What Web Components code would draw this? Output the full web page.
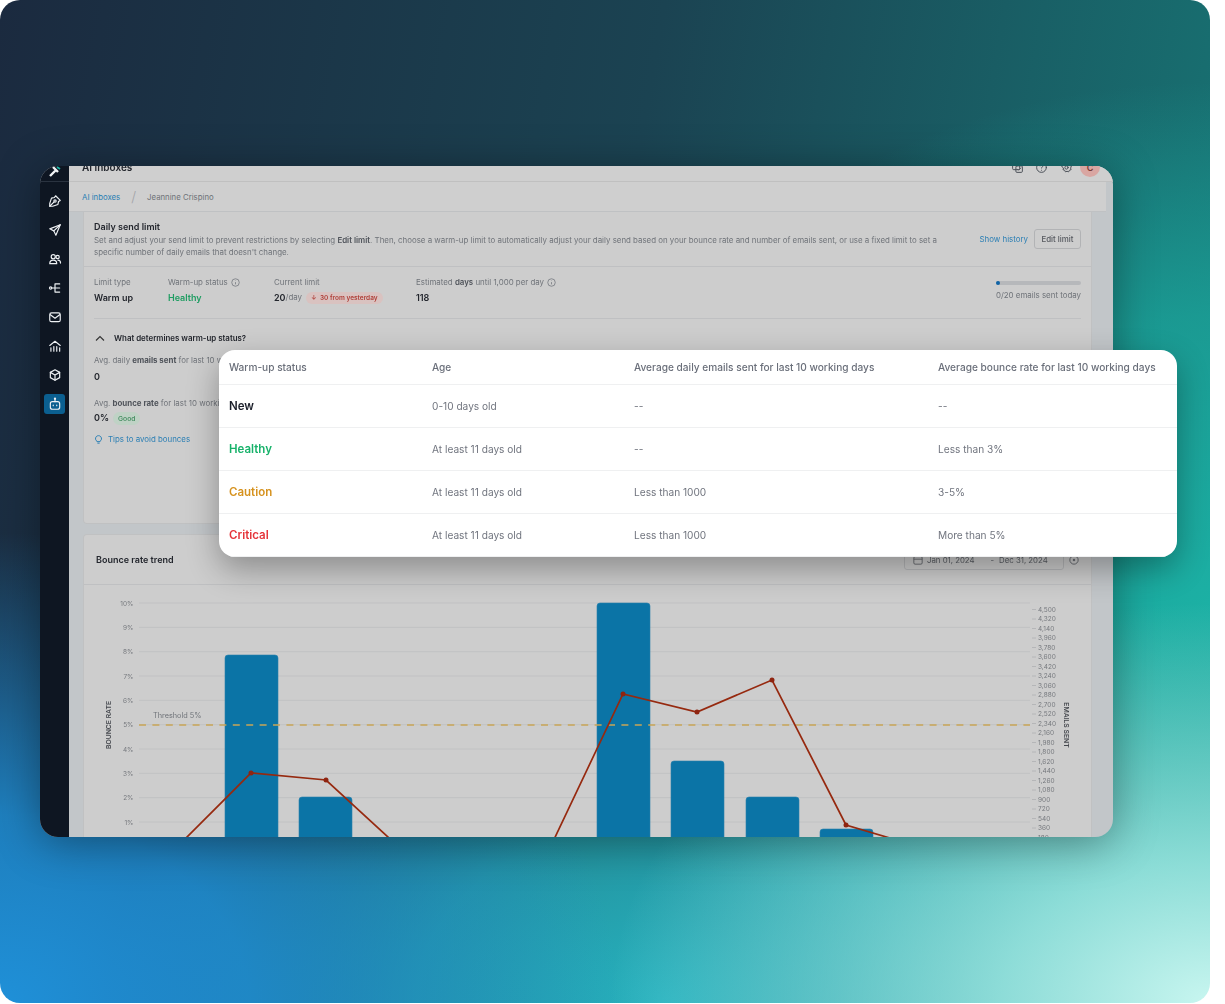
<!DOCTYPE html>
<html lang="en"><head><meta charset="utf-8"><title>AI inboxes</title>
<style>html,body{margin:0;background:#fff;font-family:Inter,"Liberation Sans",sans-serif}</style>
</head><body>
<hero-canvas>
  <app-window>
    <side-nav></side-nav>
    <top-bar></top-bar>
    <bread-crumbs></bread-crumbs>
    <send-limit-card></send-limit-card>
    <trend-card></trend-card>
  </app-window>
  <status-table>
    <status-row label="New" tone="#1b1f2a" age="0-10 days old" sent="--" bounce="--"></status-row>
    <status-row label="Healthy" tone="#17b26a" age="At least 11 days old" sent="--" bounce="Less than 3%"></status-row>
    <status-row label="Caution" tone="#d6921e" age="At least 11 days old" sent="Less than 1000" bounce="3-5%"></status-row>
    <status-row label="Critical" tone="#e5343a" age="At least 11 days old" sent="Less than 1000" bounce="More than 5%"></status-row>
  </status-table>
</hero-canvas>
<script>
function def(name, css, html, init){
  customElements.define(name, class extends HTMLElement{
    connectedCallback(){
      if(this.shadowRoot) return;
      const r=this.attachShadow({mode:'open'});
      r.innerHTML='<style>'+css+'</style>'+(typeof html==='function'?html(this):html);
      if(init) init(r,this);
    }
  });
}
def('hero-canvas',`
:host{display:block;position:relative;width:1210px;height:1003px;border-radius:20px;overflow:hidden;
background:
 radial-gradient(ellipse 600px 400px at 100% 100%,#c8f6f0 0,rgba(160,232,226,.85) 35%,rgba(90,210,200,0) 100%),
 radial-gradient(ellipse 620px 470px at 0% 100%,#1f90d8 0,rgba(31,144,216,.82) 40%,rgba(31,120,180,0) 100%),
 radial-gradient(ellipse 560px 400px at 55% 100%,#27b2bf 0,rgba(39,178,190,.7) 45%,rgba(39,178,190,0) 100%),
 radial-gradient(ellipse 640px 520px at 100% 60%,#1cb0a4 0,rgba(28,176,164,.65) 55%,rgba(28,176,164,0) 100%),
 linear-gradient(100deg,#1b2a3f 0,#1b4352 48%,#177a78 100%);}
`,'<slot></slot>');

def('app-window',`
:host{display:grid;grid-template-columns:29px 1fr;grid-template-rows:auto auto 1fr;position:absolute;left:40px;top:166px;width:1073px;height:671px;
border-radius:18px;overflow:hidden;background:#c2c6c9;box-shadow:0 6px 44px rgba(0,0,0,.38);font-family:Inter,"Liberation Sans",sans-serif;filter:blur(.4px)}
::slotted(side-nav){grid-row:1/6}
`,'<slot></slot>');

const ic=(p)=>`<svg viewBox="0 0 24 24" width="14" height="14" fill="none" stroke="#eef1f4" stroke-width="2" stroke-linecap="round" stroke-linejoin="round">${p}</svg>`;
def('side-nav',`
:host{display:flex;flex-direction:column;align-items:center;background:#0e1622;width:29px;overflow:hidden}
.logo{height:15px;width:100%;border-bottom:1px solid #2a3340;display:flex;justify-content:center;align-items:flex-start;flex:none}
.logo svg{margin-top:-2px}
.list{display:flex;flex-direction:column;gap:7px;margin-top:8px;align-items:center}
.i{width:21px;height:22px;display:flex;align-items:center;justify-content:center;border-radius:3px}
.on{background:#0b5f90;height:20px;margin-top:1px}
`,`<div class="logo"><svg width="16" height="15" viewBox="0 0 16 15"><path d="M3 12 9 6M6 3l5 5" stroke="#f2f4f6" stroke-width="2.4" fill="none"/><path d="M10 3l3 2" stroke="#1bb5a8" stroke-width="1.8"/></svg></div>
<div class="list">
<div class="i">${ic('<path d="M13 3l8 8-3 2-1 5-9 3-5 0 0-5 3-9 5-1z"/><circle cx="12" cy="12" r="2"/><path d="M3 21l7.500-7.500"/>')}</div>
<div class="i">${ic('<path d="M21 3 3 10l7 3.500L13.500 21z"/><path d="M21 3 10 13.500"/>')}</div>
<div class="i">${ic('<circle cx="9" cy="8" r="3.500"/><circle cx="16.500" cy="8.500" r="2.800"/><path d="M3 20c0-4 2.500-6 6-6s6 2 6 6zM17 14c2.500 0 4.500 1.800 4.500 5"/>')}</div>
<div class="i">${ic('<circle cx="4.500" cy="12" r="2"/><path d="M7 12h5M12 5v14M12 5h8M12 12h8M12 19h8"/>')}</div>
<div class="i">${ic('<rect x="3" y="5" width="18" height="15" rx="3"/><path d="M4 8l8 6 8-6"/>')}</div>
<div class="i">${ic('<path d="M3 11l9-7 9 7M5 21v-6M10 21v-8M15 21v-8M20 21v-6"/>')}</div>
<div class="i">${ic('<path d="M12 3l8 4.500v9L12 21l-8-4.500v-9z"/><path d="M4 7.500l8 4.500 8-4.500M12 12v9"/>')}</div>
<div class="i on">${ic('<rect x="4" y="8" width="16" height="13" rx="3.500"/><path d="M12 8V3"/><circle cx="12" cy="3" r="1"/><path d="M9 14v1M15 14v1"/>')}</div>
</div>`);

const tic=(p)=>`<svg viewBox="0 0 24 24" width="13" height="13" fill="none" stroke="#4a4f57" stroke-width="1.800" stroke-linecap="round" stroke-linejoin="round">${p}</svg>`;
def('top-bar',`
:host{display:block;height:15px;overflow:hidden;background:#cfcfcf;border-bottom:1px solid #c0c0c0}
.row{display:flex;align-items:center;height:32px;margin-top:-15px;padding:0 13px 0 13px;gap:11.500px}
b{font-size:10px;font-weight:600;color:#23262d;flex:1}
.av{width:20px;height:20px;margin-left:-4px;border-radius:50%;background:#d9a6a2;color:#7a3b36;font-size:9px;font-weight:600;display:flex;align-items:center;justify-content:center}
`,`<div class="row"><b>AI inboxes</b>
${tic('<rect x="3" y="3" width="13" height="13" rx="2"/><rect x="9" y="9" width="12" height="12" rx="2"/><path d="M12 15l2 2 4-4"/>')}
${tic('<circle cx="12" cy="12" r="9"/><path d="M9.500 9a2.500 2.500 0 1 1 3.500 2.300c-.7.4-1 1-1 1.700M12 17v.1"/>')}
${tic('<circle cx="12" cy="12" r="3"/><path d="M12 3l2 2.500 3.500-.5.8 3.200L21 10l-1.500 3 1 3-3 1-1.500 3-3-1-3 1-1.500-3-3-1 1-3L3 10l2.700-1.800.8-3.200L10 5.500z"/>')}
<div class="av">C</div></div>`);

def('bread-crumbs',`
:host{display:flex;align-items:center;height:29px;margin-right:7px;background:#cfcfcf;border-bottom:1px solid #bfc1c3;padding-left:13px;font-size:7.800px;gap:11px}
a{color:#2b7fb4}span{color:#6e7278}i{font-style:normal;color:#a2a4a8;font-size:14px;font-weight:300}
`,`<a>AI inboxes</a><i>/</i><span>Jeannine Crispino</span>`);

def('send-limit-card',`
:host{display:block;height:312px;box-sizing:border-box;margin:0 21px 10px 14px;background:#cdcdcd;border:1px solid #c0c1c2;border-top:0;border-radius:0 0 4px 4px;color:#6f7379;font-size:7.900px;overflow:hidden}
.head{display:flex;height:55px;box-sizing:border-box;padding:9px 10px 0 10px;border-bottom:1px solid #bfc0c2;gap:14px}
.txt{flex:1}
h3{margin:0 0 1px;font-size:9px;line-height:12px;color:#23262d;font-weight:600}
p{margin:0;line-height:12px}p b,.lab b{color:#4f535a;font-weight:600}
.act{display:flex;align-items:flex-start;gap:6px;margin-top:8px;white-space:nowrap}
.act a{color:#2b7fb4;line-height:20px}
button{font:500 7.900px Inter,"Liberation Sans",sans-serif;color:#55585e;height:20px;width:47px;padding:0;background:#cdcdcd;border:1px solid #b2b3b5;border-radius:3px}
.stats{display:flex;margin:0 10px;height:52px;border-bottom:1px solid #bfc0c2;box-sizing:border-box;padding-top:10px}
.c{display:flex;flex-direction:column;gap:3px}
.lab{line-height:11px;display:flex;align-items:center;gap:3px;white-space:nowrap}
.val{font-size:9px;font-weight:600;color:#23262d;line-height:13px;white-space:nowrap;display:flex;align-items:center;gap:3px}
.val small{font-size:7.900px;font-weight:400;color:#6f7379;margin-left:-3px}
.pill{font-size:6.500px;font-weight:600;color:#b0413a;background:#d9c2c0;border-radius:7px;padding:0 5px;line-height:12px;margin-left:1px}
.right{margin-left:auto;align-items:flex-end;gap:5px;padding-top:4px}
.bar{width:85px;height:4px;border-radius:2px;background:#b6b8bb;position:relative}
.bar i{position:absolute;left:0;top:0;width:4px;height:4px;border-radius:50%;background:#0f63a6}
.more{padding:12px 10px 0}
.q{display:flex;align-items:center;gap:9px;font-weight:600;color:#23262d;line-height:14px;margin-left:1px}
.a{line-height:11px;white-space:nowrap}
.n{font-size:9px;font-weight:600;color:#23262d;line-height:14px;margin-top:4px;display:flex;align-items:center;gap:4px}
.good{font-size:6.800px;font-weight:500;color:#3e8a5c;background:#bfd2c5;border-radius:7px;padding:0 5px;line-height:13px}
.tip{display:flex;align-items:center;gap:5px;color:#2b7fb4;margin-top:8px;line-height:12px}
.info{width:9px;height:9px}
`,`<div class="head"><div class="txt"><h3>Daily send limit</h3><p>Set and adjust your send limit to prevent restrictions by selecting <b>Edit limit</b>. Then, choose a warm-up limit to automatically adjust your daily send based on your bounce rate and number of emails sent, or use a fixed limit to set a specific number of daily emails that doesn't change.</p></div>
<div class="act"><a>Show history</a><button>Edit limit</button></div></div>
<div class="stats">
<div class="c" style="width:74px"><div class="lab">Limit type</div><div class="val">Warm up</div></div>
<div class="c" style="width:106px"><div class="lab">Warm-up status <svg class="info" viewBox="0 0 12 12" fill="none" stroke="#6f7379"><circle cx="6" cy="6" r="5"/><path d="M6 5.500v3M6 3.500v.5"/></svg></div><div class="val" style="color:#1f9d62">Healthy</div></div>
<div class="c" style="width:142px"><div class="lab">Current limit</div><div class="val">20<small>/day</small><span class="pill">↓&nbsp; 30 from yesterday</span></div></div>
<div class="c"><div class="lab"><span>Estimated <b>days</b> until 1,000 per day</span> <svg class="info" viewBox="0 0 12 12" fill="none" stroke="#6f7379"><circle cx="6" cy="6" r="5"/><path d="M6 5.500v3M6 3.500v.5"/></svg></div><div class="val">118</div></div>
<div class="c right"><div class="bar"><i></i></div><div class="lab">0/20 emails sent today</div></div>
</div>
<div class="more"><div class="q"><svg width="10" height="7" viewBox="0 0 10 7" fill="none" stroke="#333" stroke-width="1.100"><path d="M1 5.500 5 1.500l4 4"/></svg>What determines warm-up status?</div>
<div class="a" style="margin-top:10px"><span>Avg. daily <b style="color:#4f535a">emails sent</b> for last 10 working days</span></div><div class="n">0</div>
<div class="a" style="margin-top:14px"><span>Avg. <b style="color:#4f535a">bounce rate</b> for last 10 working days</span></div><div class="n" style="margin-top:2px">0% <span class="good">Good</span></div>
<div class="tip"><svg width="9" height="10" viewBox="0 0 12 13" fill="none" stroke="#2b7fb4" stroke-width="1.300"><path d="M4 9.500a4 4 0 1 1 4 0V10H4zM4.500 12h3"/></svg>Tips to avoid bounces</div></div>`);

def('trend-card',`
:host{display:block;margin:0 21px 0 14px;background:#cdcdcd;border:1px solid #c0c1c2;border-bottom:0;border-radius:4px 4px 0 0;overflow:hidden;height:303px}
.head{display:flex;align-items:center;height:50px;box-sizing:border-box;border-bottom:1px solid #bfc0c2;padding:0 12px}
h3{margin:0;font-size:9px;font-weight:600;color:#23262d;flex:1}
.date{display:flex;align-items:center;width:160px;height:20px;box-sizing:border-box;border:1px solid #b6b7b9;border-radius:3px;padding:0 8px;font-size:7.800px;color:#5b5f65}
.date span{margin-left:4px}.date em{font-style:normal;margin:0 5px 0 16px}.date em+span{margin-left:0}
.clear{margin:0 0 0 5px}
svg{display:block}
text{font-family:Inter,"Liberation Sans",sans-serif}
`,()=>{
  const bars=[[225,655],[299,797],[597,603],[671,761],[746,797],[820,829]];
  const pts=[[177,847],[251,773],[326,780],[401,849],[549,850],[623,694],[697,712],[772,680],[846,825],[920,847]];
  let g='',l='',r='';
  for(let i=1;i<=10;i++){const y=822-(i-1)*24.33;
    g+=`<line x1="139" x2="1030" y1="${y}" y2="${y}" stroke="#c1c2c3" stroke-width="1"/>`;
    l+=`<text x="133.500" y="${y+2.500}" text-anchor="end" font-size="6.500" fill="#76797e">${i}%</text>`;}
  const v=[];for(let n=4500;n>=180;n-=180)v.push(n);
  v.forEach((n,i)=>{const y=609.500+i*9.500;
    r+=`<line x1="1032" x2="1036" y1="${y}" y2="${y}" stroke="#b5b6b8"/><text x="1038" y="${y+2.400}" font-size="6.500" fill="#76797e">${n.toLocaleString('en-US')}</text>`;});
  const b=bars.map(([x,y])=>`<path d="M${x} 860V${y+3}a3 3 0 0 1 3-3h47a3 3 0 0 1 3 3V860z" fill="#0b74a6" stroke="#2a82ad" stroke-width=".6"/>`).join('');
  const dots=pts.map(([x,y])=>`<circle cx="${x}" cy="${y}" r="2.500" fill="#8f2410"/>`).join('');
  const line=`<polyline points="${pts.slice(0,4).map(p=>p.join(',')).join(' ')}" fill="none" stroke="#96290f" stroke-width="1.700"/><polyline points="${pts.slice(4).map(p=>p.join(',')).join(' ')}" fill="none" stroke="#96290f" stroke-width="1.700"/>`;
  return `<div class="head"><h3>Bounce rate trend</h3>
<div class="date"><svg width="10" height="10" viewBox="0 0 12 12" fill="none" stroke="#5b5f65"><rect x="1" y="2" width="10" height="9" rx="1.500"/><path d="M1 5h10"/></svg><span>Jan 01, 2024</span><em>-</em><span>Dec 31, 2024</span></div>
<svg class="clear" width="10" height="10" viewBox="0 0 12 12" fill="none" stroke="#5b5f65"><circle cx="6" cy="6" r="5"/><circle cx="6" cy="6" r="1" fill="#5b5f65"/></svg></div>
<svg width="1008" height="252" viewBox="84 585 1008 252">
${g}${l}${r}
<text x="153" y="718" font-size="7.300" fill="#6f7379">Threshold 5%</text>
<text transform="translate(111 725) rotate(-90)" text-anchor="middle" font-size="6.800" font-weight="600" fill="#45484e">BOUNCE RATE</text>
<text transform="translate(1063.500 725) rotate(90)" text-anchor="middle" font-size="6.800" font-weight="600" fill="#45484e">EMAILS SENT</text>
${b}
<line x1="139" x2="1030" y1="725" y2="725" stroke="#c9a557" stroke-width="1.400" stroke-dasharray="7 6.400"/>
${line}${dots}
</svg>`;
});

def('status-table',`
:host{display:block;position:absolute;left:219px;top:350px;width:958px;height:207px;box-sizing:border-box;background:#fff;border-radius:16px;overflow:hidden;box-shadow:0 12px 32px rgba(0,0,0,.32);font-family:Inter,"Liberation Sans",sans-serif;filter:blur(.2px)}
.head{display:grid;grid-template-columns:203px 202px 304px 1fr;padding-left:10px;height:34px;align-items:center;border-bottom:1px solid #eff0f1;font-size:10.150px;font-weight:500;color:#6a6f7a;white-space:nowrap}
`,`<div class="head"><div>Warm-up status</div><div>Age</div><div>Average daily emails sent for last 10 working days</div><div>Average bounce rate for last 10 working days</div></div><slot></slot>`);

def('status-row',`
:host{display:block}
.r{display:grid;grid-template-columns:203px 202px 304px 1fr;padding-left:10px;height:42px;align-items:center;border-bottom:1px solid #eff0f1;font-size:10.150px;color:#71757f}
b{font-size:11.500px;font-weight:600}
`,(h)=>`<div class="r"><b style="color:${h.getAttribute('tone')}">${h.getAttribute('label')}</b><div>${h.getAttribute('age')}</div><div>${h.getAttribute('sent')}</div><div>${h.getAttribute('bounce')}</div></div>`);
</script>
</body></html>
